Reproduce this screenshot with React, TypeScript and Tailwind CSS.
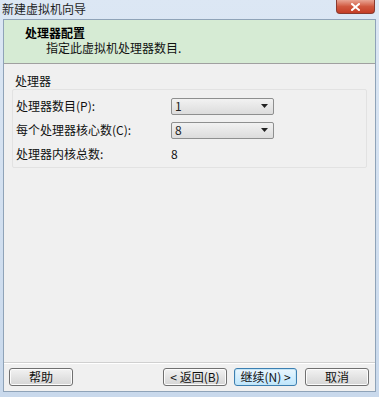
import React from "react";

const font = {
  fontFamily: '"Noto Sans CJK SC", "Noto Sans", sans-serif',
};

function WinSelect({ value }: { value: string }) {
  return (
    <div className="flex h-[17px] w-[103px] items-center justify-between rounded-[2px] border border-[#8e8f8f] bg-gradient-to-b from-[#f2f2f2] to-[#dcdcdc] pl-[3px] pr-[5px]">
      <span className="text-[12px] leading-none text-[#222]">{value}</span>
      <svg width="7" height="4" viewBox="0 0 7 4">
        <path d="M0 0h7L3.5 4z" fill="#222" />
      </svg>
    </div>
  );
}

function WinButton({
  label,
  focused = false,
}: {
  label: string;
  focused?: boolean;
}) {
  return (
    <button
      className={
        focused
          ? "flex h-[18px] w-[63px] items-center justify-center rounded-[3px] border border-[#3c7fb1] bg-gradient-to-b from-[#eaf6fd] to-[#bee6fd] text-[12px] leading-none text-[#111] shadow-[inset_0_0_0_1px_#c4e5f6]"
          : "flex h-[18px] w-[64px] items-center justify-center rounded-[3px] border border-[#707070] bg-gradient-to-b from-[#f2f2f2] to-[#d5d5d5] text-[12px] leading-none text-[#111] shadow-[inset_0_0_0_1px_#fcfcfc]"
      }
    >
      {label}
    </button>
  );
}

export default function App() {
  return (
    <div
      style={font}
      className="flex h-[397px] w-[379px] flex-col bg-gradient-to-b from-[#dce7f4] to-[#c9d9ec]"
    >
      {/* title bar */}
      <div className="flex h-[19px] items-start justify-between pl-[2px] pr-[4px]">
        <span className="mt-[2px] text-[12px] leading-[14px] text-[#1e1e1e]">
          新建虚拟机向导
        </span>
        <div className="flex h-[14px] w-[39px] items-center justify-center rounded-b-[4px] border border-t-0 border-[#8a3a2e] bg-gradient-to-b from-[#e8a493] via-[#d0583f] to-[#c43c24]">
          <svg width="9" height="8" viewBox="0 0 9 8">
            <path
              d="M1 1l7 6M8 1L1 7"
              stroke="#fff"
              strokeWidth="2"
              strokeLinecap="square"
            />
          </svg>
        </div>
      </div>

      {/* client area */}
      <div className="mx-[3px] mb-[5px] flex flex-1 flex-col border border-[#8fa3b8] bg-[#f0f0f0]">
        <div className="h-[44px] border-b border-[#a0a0a0] bg-[#d6ebd4] pl-[21px] pt-[5px]">
          <div className="text-[12px] font-bold leading-[15px] text-[#000]">
            处理器配置
          </div>
          <div className="pl-[21px] text-[12px] leading-[15px] text-[#111]">
            指定此虚拟机处理器数目.
          </div>
        </div>

        <div className="flex-1 px-[8px] pt-[10px]">
          <div className="pl-[3px] text-[12px] leading-[14px] text-[#111]">
            处理器
          </div>
          <div className="mt-[1px] h-[79px] rounded-[2px] border border-[#e2e2e2] pl-[3px] pt-[7px]">
            <div className="grid grid-cols-[155px_auto] items-center gap-y-[6px] text-[12px] text-[#111]">
              <span>处理器数目(P):</span>
              <WinSelect value="1" />
              <span>每个处理器核心数(C):</span>
              <WinSelect value="8" />
              <span>处理器内核总数:</span>
              <span>8</span>
            </div>
          </div>
        </div>

        <div className="flex h-[29px] items-center border-t border-[#d0d0d0] pl-[5px] pr-[6px] shadow-[inset_0_1px_0_#ffffff]">
          <WinButton label="帮助" />
          <div className="flex-1" />
          <div className="flex gap-[7px]">
            <WinButton label="< 返回(B)" />
            <WinButton label="继续(N) >" focused />
            <div className="ml-[1px]">
              <WinButton label="取消" />
            </div>
          </div>
        </div>
      </div>
    </div>
  );
}
